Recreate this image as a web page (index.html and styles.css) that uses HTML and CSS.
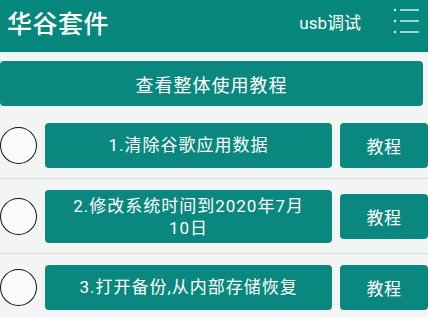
FILE: index.html
```html
<!DOCTYPE html>
<html lang="zh-CN">

<head>
    <meta charset="UTF-8">
    <meta name="viewport" content="width=device-width, initial-scale=1.0">
    <title>华谷套件</title>
    <link rel="stylesheet" href="styles.css">
</head>

<body>
    <div class="header">
        <span class="title">华谷套件</span>
        <span class="usb">usb调试</span>
        <svg class="menu" width="28" height="28" viewBox="0 0 28 28">
            <circle cx="3" cy="3" r="1.2" fill="#e6f4f2"/>
            <circle cx="3" cy="14" r="1.2" fill="#e6f4f2"/>
            <circle cx="3" cy="25" r="1.2" fill="#e6f4f2"/>
            <line x1="8" y1="3" x2="27" y2="3" stroke="#e6f4f2" stroke-width="1.4"/>
            <line x1="8" y1="14" x2="27" y2="14" stroke="#e6f4f2" stroke-width="1.4"/>
            <line x1="8" y1="25" x2="27" y2="25" stroke="#e6f4f2" stroke-width="1.4"/>
        </svg>
    </div>
    <div class="content">
        <button class="big">查看整体使用教程</button>
        <div class="row">
            <span class="check"></span>
            <button class="step">1.清除谷歌应用数据</button>
            <button class="help">教程</button>
        </div>
        <div class="row">
            <span class="check"></span>
            <button class="step tall">2.修改系统时间到2020年7月<br>10日</button>
            <button class="help">教程</button>
        </div>
        <div class="row">
            <span class="check"></span>
            <button class="step">3.打开备份,从内部存储恢复</button>
            <button class="help">教程</button>
        </div>
    </div>
</body>

</html>
```

FILE: styles.css
```css
* {
    padding: 0;
    margin: 0;
    box-sizing: border-box;
}

body {
    width: 428px;
    height: 317px;
    overflow: hidden;
    background: #f3f4f4;
    font-family: Roboto, "Noto Sans CJK SC", sans-serif;
}

.header {
    height: 53px;
    background: #05877c;
    color: white;
    display: flex;
    align-items: center;
    padding: 0 8px 0 7px;
    border-bottom: 1px solid #d4f4f4;
}

.title {
    font-size: 25px;
    font-weight: 500;
    letter-spacing: 0.5px;
    flex: 1;
    margin-top: -8px;
}

.usb {
    font-size: 17px;
    margin-right: 31px;
    margin-top: -10px;
}

.menu {
    margin-top: -10px;
}

button {
    font-family: inherit;
    color: white;
    background: #0a877e;
    border: none;
    border-radius: 4px;
    letter-spacing: 1px;
}

.big {
    display: block;
    width: 423px;
    height: 45px;
    margin: 8px 5px 6px 0;
    font-size: 18px;
    letter-spacing: 1px;
}

.row {
    display: flex;
    align-items: center;
    gap: 8px;
    padding: 11px 0 10px;
    border-bottom: 1px solid #dedede;
}

.check {
    width: 37px;
    height: 37px;
    border: 1.5px solid #111;
    border-radius: 50%;
    background: #fafafa;
}

.step {
    width: 288px;
    height: 45px;
    font-size: 17px;
    line-height: 23px;
}

.step.tall {
    height: 53px;
    line-height: 22px;
}

.help {
    width: 88px;
    height: 45px;
    font-size: 17px;
    letter-spacing: 0.5px;
}
```
